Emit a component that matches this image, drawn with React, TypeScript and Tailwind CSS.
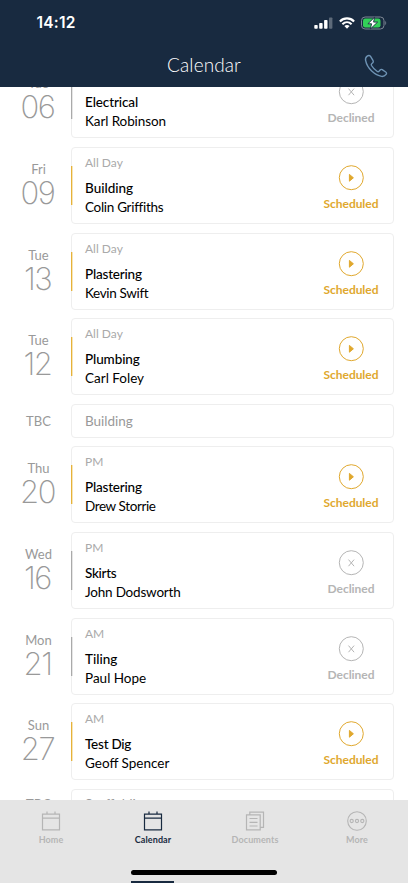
import type { ReactNode } from 'react';
import clsx from 'clsx';

type Status = 'Scheduled' | 'Declined';

type Booking = {
  day?: string;
  date: string;
  slot?: string;
  job: string;
  person?: string;
  status?: Status;
  // letter spacing of the job and person lines
  jobClass?: string;
  personClass?: string;
};

const bookings: Booking[] = [
  { day: 'Tue', date: '06', slot: 'All Day', job: 'Electrical', person: 'Karl Robinson', status: 'Declined', jobClass: 'tracking-[-0.1px]', personClass: 'tracking-[-0.1px]' },
  { day: 'Fri', date: '09', slot: 'All Day', job: 'Building', person: 'Colin Griffiths', status: 'Scheduled', personClass: 'tracking-[-0.3px]' },
  { day: 'Tue', date: '13', slot: 'All Day', job: 'Plastering', person: 'Kevin Swift', status: 'Scheduled', jobClass: 'tracking-[-0.2px]', personClass: 'tracking-[-0.35px]' },
  { day: 'Tue', date: '12', slot: 'All Day', job: 'Plumbing', person: 'Carl Foley', status: 'Scheduled', jobClass: 'tracking-[-0.1px]' },
  { date: 'TBC', job: 'Building' },
  { day: 'Thu', date: '20', slot: 'PM', job: 'Plastering', person: 'Drew Storrie', status: 'Scheduled', jobClass: 'tracking-[-0.2px]', personClass: 'tracking-[-0.4px]' },
  { day: 'Wed', date: '16', slot: 'PM', job: 'Skirts', person: 'John Dodsworth', status: 'Declined', jobClass: 'tracking-[-0.3px]', personClass: 'tracking-[-0.2px]' },
  { day: 'Mon', date: '21', slot: 'AM', job: 'Tiling', person: 'Paul Hope', status: 'Declined' },
  { day: 'Sun', date: '27', slot: 'AM', job: 'Test Dig', person: 'Geoff Spencer', status: 'Scheduled', jobClass: 'tracking-[-0.25px]' },
  { date: 'TBC', job: 'Scaffolding' },
];

function StatusIcon({ status }: { status: Status }) {
  return (
    <svg width="26" height="26" viewBox="0 0 26 26" fill="none" stroke="currentColor">
      <circle cx="13.3" cy="12.7" r="12" />
      {status === 'Scheduled' ? (
        <path d="M11.4 9.4v6.8l4-3.4z" fill="currentColor" />
      ) : (
        <path d="M10.5 9.6l5.6 6.6M16.1 9.6l-5.6 6.6" />
      )}
    </svg>
  );
}

function BookingRow({ day, date, slot, job, person, status, jobClass, personClass }: Booking) {
  if (!status) {
    return (
      <div className="group flex h-[34px]">
        <div className="w-[71px] pt-[8px] pl-[6px] text-center text-[13px] leading-[18px] text-[#999] group-last:pt-[6px]">
          {date}
        </div>
        <div className="h-full w-[323px] rounded border border-[#eee] pt-[7px] pl-[13px] text-[13.5px] leading-[19px] text-[#999] group-last:pt-[5px]">
          {job}
        </div>
      </div>
    );
  }

  const scheduled = status === 'Scheduled';
  return (
    <div className="flex h-[77px]">
      <div className="w-[71px] pt-[13px] pl-[6px] text-center text-[#999]">
        <div className="text-[13px] leading-[18px]">{day}</div>
        <div className="pr-[2px] font-['Inter',sans-serif] text-[31px] leading-[29px] font-extralight tracking-[-1.5px]">
          {date}
        </div>
      </div>
      <div className="relative flex h-full w-[323px] justify-between rounded border border-[#eee] pl-[13px]">
        <div
          className={clsx(
            'absolute top-[18px] left-[-1px] h-[39px] w-[2px] border-r',
            scheduled ? 'border-[#f7e5b8] bg-[#e6b23a]' : 'border-[#e6e6e6] bg-[#aaaaaa]',
          )}
        />
        <div className="pt-[7px]">
          <div className="text-[12px] leading-[16px] text-[#aaa]">{slot}</div>
          <div className={clsx('mt-[8px] text-[13.5px] leading-[19px] font-medium text-black', jobClass)}>{job}</div>
          <div className={clsx('text-[13.5px] leading-[19px] text-black', personClass)}>{person}</div>
        </div>
        <div
          className={clsx(
            'flex w-[84px] flex-col items-center pt-[17px]',
            scheduled ? 'text-[#e0a82e]' : 'text-[#b5b5b5]',
          )}
        >
          <StatusIcon status={status} />
          <div className="mt-[5px] text-[12px] leading-[16px] font-bold tracking-[-0.05px]">{status}</div>
        </div>
      </div>
    </div>
  );
}

function CalendarIcon() {
  return (
    <svg width="20" height="20" viewBox="0 0 20 20" fill="none" stroke="currentColor" strokeWidth="1.2">
      <path d="M1.5 3.2h17v15.6h-17zM1.5 7.2h17M6 .5v3M14 .5v3" />
    </svg>
  );
}

function DocumentsIcon() {
  return (
    <svg width="20" height="20" viewBox="0 0 20 20" fill="none" stroke="currentColor" strokeWidth="1.2">
      <path d="M1.5 3.8h13.7v15H1.5zM4.8 3.8V1.2h13.7v15.2h-3.3M4.5 7.5h8M4.5 11.3h8M4.5 15h8" />
    </svg>
  );
}

function MoreIcon() {
  return (
    <svg width="20" height="20" viewBox="0 0 20 20" fill="none" stroke="currentColor" strokeWidth="1.1">
      <circle cx="10" cy="10" r="9.3" />
      <circle cx="4.7" cy="10" r="1.6" />
      <circle cx="10" cy="10" r="1.6" />
      <circle cx="15.3" cy="10" r="1.6" />
    </svg>
  );
}

const tabs: { label: string; icon: ReactNode; active?: boolean }[] = [
  { label: 'Home', icon: <CalendarIcon /> },
  { label: 'Calendar', icon: <CalendarIcon />, active: true },
  { label: 'Documents', icon: <DocumentsIcon /> },
  { label: 'More', icon: <MoreIcon /> },
];

function Header() {
  return (
    <header className="relative z-10 h-[87px] shrink-0 bg-[#182a40] text-white">
      <div className="flex h-[45px] items-center justify-between pr-[21px] pl-[36.5px]">
        <span className="font-['Inter',sans-serif] text-[15.5px] font-semibold tracking-[0.2px]">14:12</span>
        <div className="flex items-center gap-[6px]">
          <svg width="19" height="12" viewBox="0 0 19 12" fill="currentColor">
            <rect x="0.3" y="8" width="3.4" height="3.8" rx="0.8" />
            <rect x="5.2" y="6" width="3.4" height="5.8" rx="0.8" />
            <rect x="10.1" y="3" width="3.4" height="8.8" rx="0.8" />
            <rect x="15" y="0.4" width="3.4" height="11.4" rx="0.8" opacity="0.3" />
          </svg>
          <svg width="16" height="12" viewBox="0 0 16 12" fill="none" stroke="currentColor" strokeWidth="2.1">
            <path d="M.9 4.4c4-4 10.2-4 14.2 0M3.4 7.2c2.7-2.6 6.5-2.6 9.2 0" />
            <path d="M5.4 9c1.5-1.4 3.7-1.4 5.2 0L8 11.8z" fill="currentColor" stroke="none" />
          </svg>
          <svg width="26" height="14" viewBox="0 0 26 14" fill="none">
            <rect x="0.5" y="1" width="22.5" height="12" rx="3.6" stroke="#7c8794" />
            <rect x="2" y="2.5" width="17.5" height="9" rx="2.2" fill="#32d058" />
            <path d="M24.3 5v4c1.2-.5 1.2-3.5 0-4z" fill="#7c8794" />
            <path d="M13.6 1.2L6.9 7.8h3.7L9.3 13 16.6 6.1h-4z" fill="#fff" stroke="#182a40" strokeWidth="0.9" />
          </svg>
        </div>
      </div>
      <div className="relative flex h-[42px] items-center justify-center">
        <h1 className="mb-[2px] text-[19px] font-light tracking-[0.1px]">Calendar</h1>
        <svg
          className="absolute top-[9px] right-[20px] text-[#6e93b4]"
          width="24"
          height="24"
          viewBox="0 0 24 24"
          fill="none"
          stroke="currentColor"
          strokeWidth="1.4"
          strokeLinejoin="round"
        >
          <path d="M3.2 2.1C2 3 1.2 4.4 1.6 6.4c.8 4 3 7.7 6.1 10.7 3 2.8 6.4 4.8 9.9 5.3 2 .2 3.4-.6 4.5-2 .7-.9.5-1.8-.4-2.4l-3.5-2.3c-.8-.5-1.5-.4-2.1.3l-1.1 1.3c-.6.6-1.3.5-2 0-2.2-1.5-4.1-3.5-5.5-5.8-.4-.7-.4-1.3.2-1.8l1.1-1c.7-.6.7-1.2.3-2L6.7 2.6c-.8-1.3-2.2-1.5-3.5-.5z" />
        </svg>
      </div>
    </header>
  );
}

function TabBar() {
  return (
    <footer className="relative z-10 h-[83px] shrink-0 bg-[#e5e5e5]">
      <nav className="grid grid-cols-4 pt-[11px]">
        {tabs.map((tab) => (
          <div
            key={tab.label}
            className={clsx('flex flex-col items-center', tab.active ? 'text-[#182a40]' : 'text-[#b5b5b5]')}
          >
            {tab.icon}
            <span className="mt-[2px] text-[9px] leading-[13px] font-bold tracking-[0.1px]">{tab.label}</span>
          </div>
        ))}
      </nav>
      {/* home indicator */}
      <div className="absolute top-[70px] left-[131px] h-[5px] w-[146px] rounded-full bg-black" />
      <div className="absolute bottom-0 left-[131px] h-[2px] w-[43px] bg-[#182a40]" />
    </footer>
  );
}

export default function App() {
  return (
    <div className="flex h-[883px] w-[408px] flex-col overflow-hidden bg-white font-['Lato',sans-serif]">
      <Header />
      <main className="min-h-0 flex-1 overflow-hidden">
        <div className="-mt-[25.7px] flex flex-col gap-[8.62px]">
          {bookings.map((booking, i) => (
            <BookingRow key={i} {...booking} />
          ))}
        </div>
      </main>
      <TabBar />
    </div>
  );
}
